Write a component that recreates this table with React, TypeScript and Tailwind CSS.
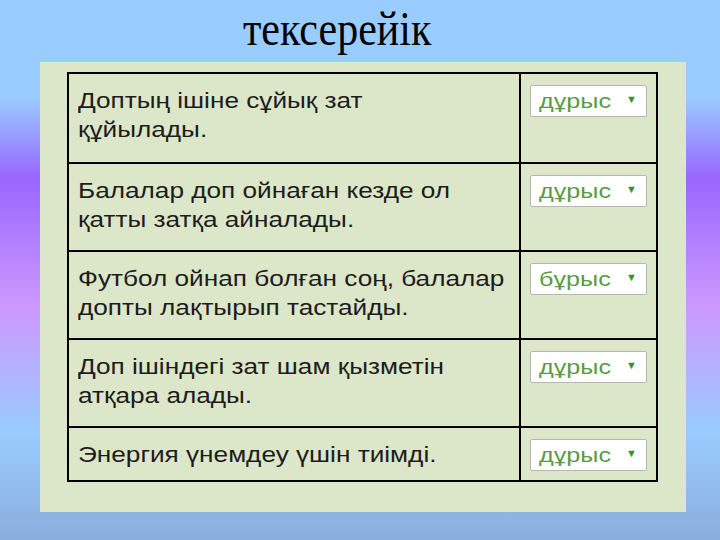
const rows = [
  { lines: ["Доптың ішіне сұйық зат", "құйылады."], answer: "дұрыс" },
  { lines: ["Балалар доп ойнаған кезде ол", "қатты затқа айналады."], answer: "дұрыс" },
  { lines: ["Футбол ойнап болған соң, балалар", "допты лақтырып тастайды."], answer: "бұрыс" },
  { lines: ["Доп ішіндегі зат шам қызметін", "атқара алады."], answer: "дұрыс" },
  { lines: ["Энергия үнемдеу үшін тиімді."], answer: "дұрыс" },
];

export default function App() {
  return (
    <div className="w-[720px] h-[540px] overflow-hidden bg-[linear-gradient(to_bottom,#99ccff_0%,#99ccff_18%,#9966ff_33%,#cc99ff_57%,#99ccff_80%,#8aaedc_100%)]">
      <div className="h-[62px] pl-[243px] pt-[10px]">
        <h1 className="inline-block origin-bottom scale-y-[1.15] text-[42px] leading-[44px] text-black font-['Liberation_Serif',serif]">
          тексерейік
        </h1>
      </div>
      <div className="ml-[40px] w-[646px] h-[450px] bg-[#dce6c8] pt-[10px] pl-[27px]">
        <div className="w-[591px] border-2 border-black font-['Liberation_Sans',Arial,sans-serif]">
          {rows.map((r, i) => (
            <div
              key={i}
              className={`flex ${r.lines.length > 1 ? "h-[88px]" : "h-[54px]"} ${i > 0 ? "border-t-2 border-black" : ""}`}
            >
              <div className="w-[452px] border-r-2 border-black pl-[9px] pt-[12px]">
                {/* source screenshot is stretched sideways, so widen the glyphs */}
                <div className="origin-left scale-x-[1.19] whitespace-nowrap text-[22px] leading-[29px] text-[#1c1c1c]">
                  {r.lines.map((l, j) => (
                    <div key={j}>{l}</div>
                  ))}
                </div>
              </div>
              <div className="flex-1 pl-[9px] pt-[11px]">
                <div className="w-[117px] h-[32px] bg-white border border-[#b5b5b5] rounded-[2px] flex items-center pl-[8px] pr-[9px] justify-between">
                  <span className="inline-block origin-left scale-x-[1.2] text-[21px] leading-none text-[#5a9c42] pb-[2px]">
                    {r.answer}
                  </span>
                  <span className="text-[11px] leading-none text-[#3f8f2c] pb-[3px]">▼</span>
                </div>
              </div>
            </div>
          ))}
        </div>
      </div>
    </div>
  );
}
